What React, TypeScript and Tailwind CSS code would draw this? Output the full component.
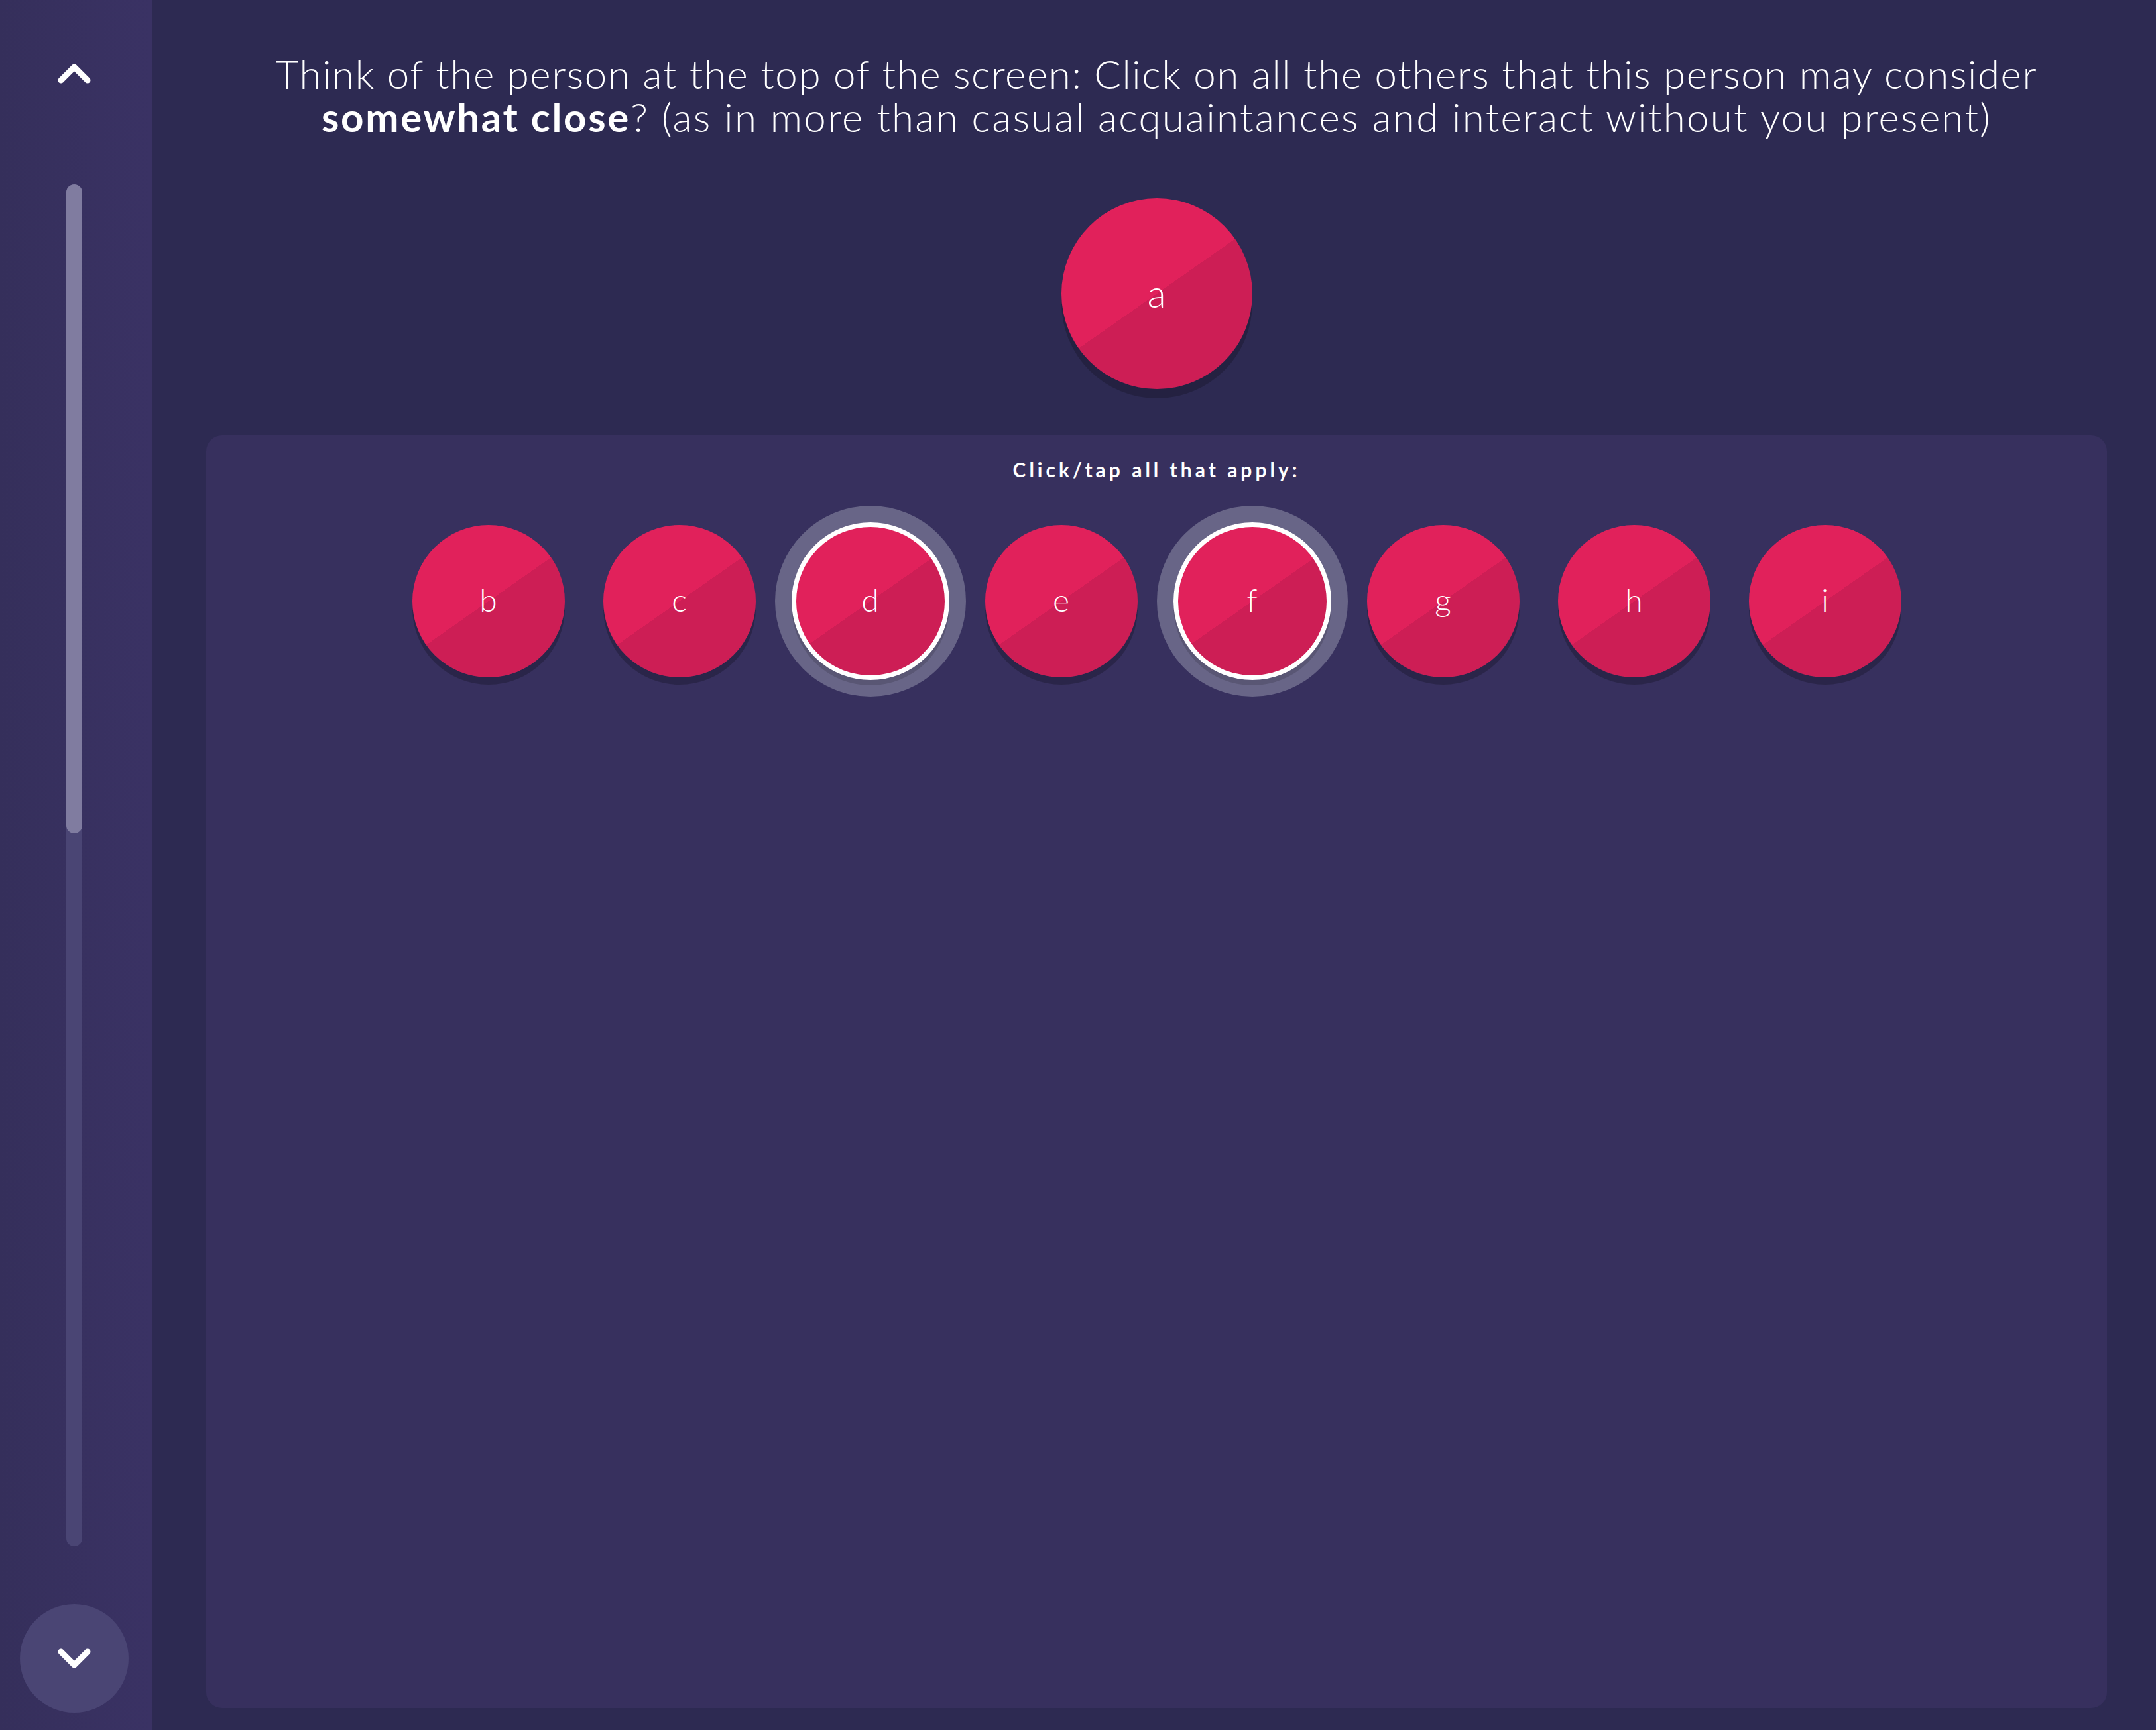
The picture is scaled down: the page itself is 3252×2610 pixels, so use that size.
import React, { useState } from "react";

interface Person {
  id: string;
  label: string;
}

const others: Person[] = ["b", "c", "d", "e", "f", "g", "h", "i"].map((l) => ({
  id: l,
  label: l,
}));

const Chevron: React.FC<{ down?: boolean }> = ({ down }) => (
  <svg width="50" height="31" viewBox="0 0 50 31" fill="none">
    <path
      d={down ? "M5 5 L25 25 L45 5" : "M5 26 L25 6 L45 26"}
      stroke="#ffffff"
      strokeWidth="9"
      strokeLinecap="round"
      strokeLinejoin="round"
    />
  </svg>
);

const PersonNode: React.FC<{
  label: string;
  selected: boolean;
  onClick: () => void;
}> = ({ label, selected, onClick }) => (
  <div className="w-[230px] h-[230px] flex items-center justify-center shrink-0">
    <button
      onClick={onClick}
      className={
        selected
          ? "w-[238px] h-[238px] shrink-0 rounded-full border-[7px] border-white bg-[linear-gradient(145deg,#e1215b_50%,#cd1e55_50%)] shadow-[0_8px_0_rgba(0,0,0,0.14),0_0_0_25px_#686587] flex items-center justify-center text-white text-[48px] font-light leading-none"
          : "w-[230px] h-[230px] shrink-0 rounded-full bg-[linear-gradient(145deg,#e1215b_50%,#cd1e55_50%)] shadow-[0_11px_0_rgba(0,0,0,0.22)] flex items-center justify-center text-white text-[48px] font-light leading-none"
      }
    >
      <span className="-mt-[4px]">{label}</span>
    </button>
  </div>
);

const App: React.FC = () => {
  const [selected, setSelected] = useState<string[]>(["d", "f"]);

  const toggle = (id: string) =>
    setSelected((s) => (s.includes(id) ? s.filter((x) => x !== id) : [...s, id]));

  return (
    <div className="flex w-full h-screen font-['Lato','Noto_Sans',sans-serif] overflow-hidden">
      {/* Side navigation */}
      <aside className="w-[229px] shrink-0 flex flex-col items-center pr-[5px] bg-linear-to-r from-[#352f5b] to-[#3a3264]">
        <button className="mt-[95px] h-[31px] flex items-center justify-center">
          <Chevron />
        </button>
        <div className="mt-[152px] w-[24px] flex-1 rounded-full bg-[#4a4574] flex flex-col">
          <div className="h-[979px] w-full rounded-full bg-[#807ca0]" />
        </div>
        <button className="mt-[87px] mb-[26px] w-[164px] h-[164px] rounded-full bg-[#4a4574] flex items-center justify-center">
          <Chevron down />
        </button>
      </aside>

      {/* Main */}
      <main className="flex-1 bg-[#2d2a52] flex flex-col items-center pl-[82px] pr-[74px] pb-[33px]">
        <h1 className="mt-[79px] text-white text-[60px] leading-[65px] font-light text-center whitespace-nowrap flex flex-col items-center">
          <span className="tracking-[1.6px]">
            Think of the person at the top of the screen: Click on all the others that this person may consider
          </span>
          <span className="tracking-[2.3px]">
            <span className="font-bold tracking-[2.7px]">somewhat close</span>? (as in more than casual
            acquaintances and interact without you present)
          </span>
        </h1>

        <div className="mt-[90px] w-[288px] h-[288px] shrink-0 rounded-full bg-[linear-gradient(145deg,#e1215b_50%,#cd1e55_50%)] shadow-[0_14px_0_rgba(0,0,0,0.2)] flex items-center justify-center text-white text-[58px] font-light leading-none">
          <span className="-mt-[2px]">a</span>
        </div>

        <section className="mt-[70px] w-full flex-1 rounded-[24px] bg-[#37305e] flex flex-col items-center pt-[34px]">
          <p className="text-white text-[30px] leading-[34px] font-bold tracking-[5px]">
            Click/tap all that apply:
          </p>
          <div className="mt-[67px] flex gap-[58px]">
            {others.map((p) => (
              <PersonNode
                key={p.id}
                label={p.label}
                selected={selected.includes(p.id)}
                onClick={() => toggle(p.id)}
              />
            ))}
          </div>
        </section>
      </main>
    </div>
  );
};

export default App;
